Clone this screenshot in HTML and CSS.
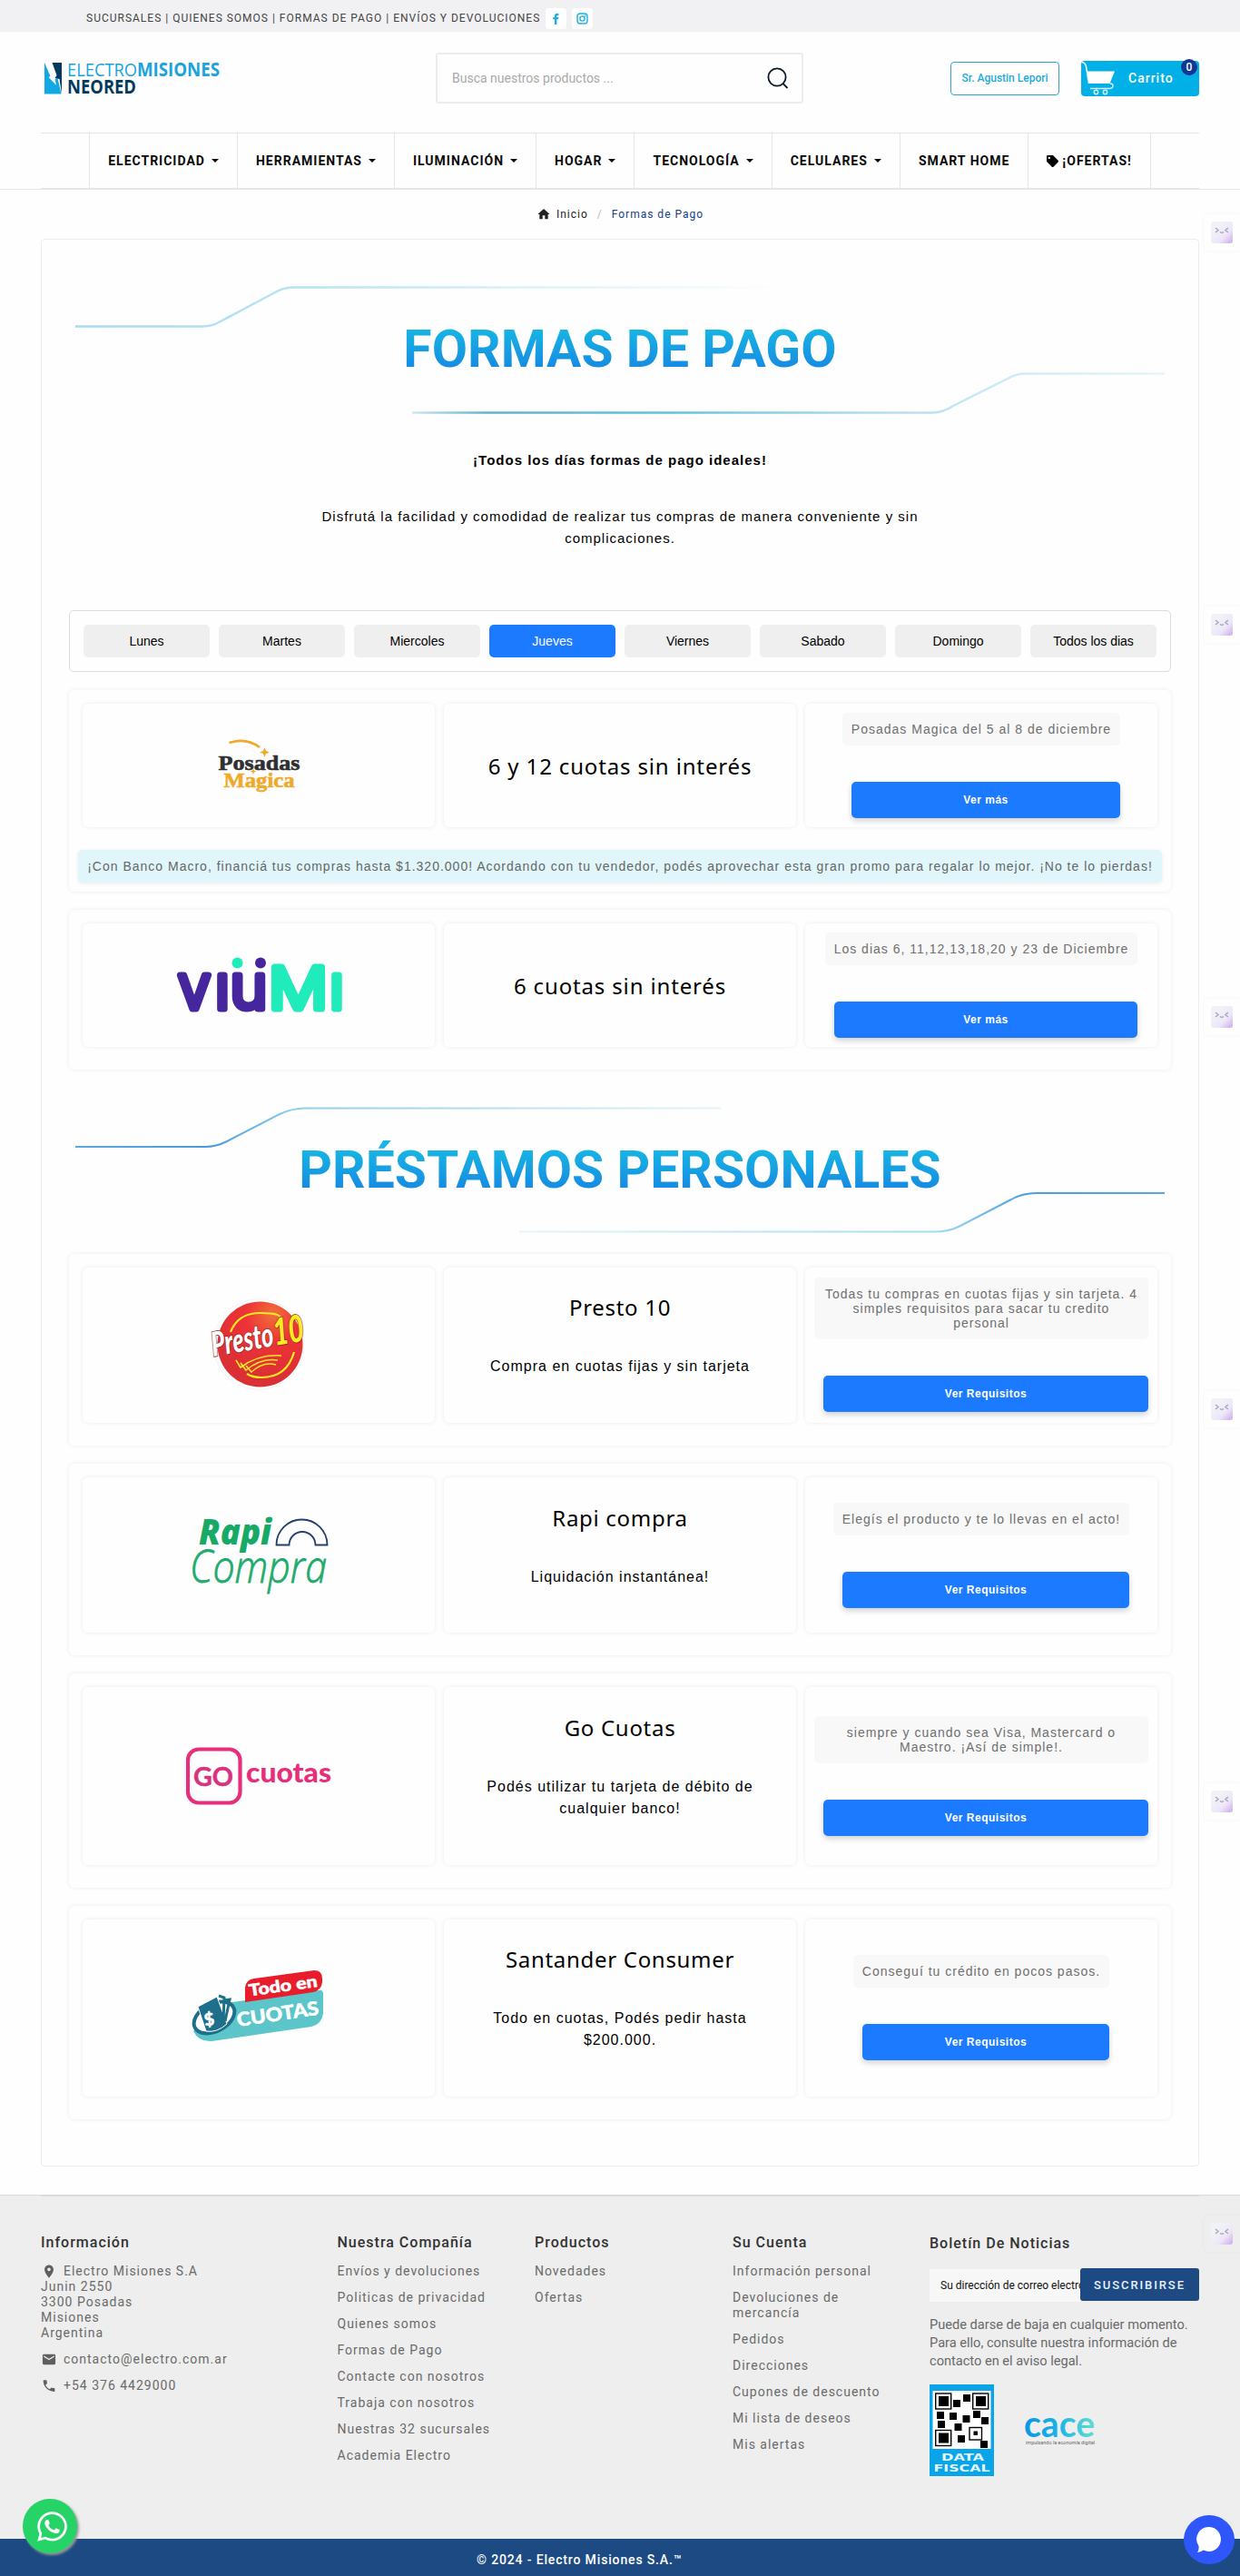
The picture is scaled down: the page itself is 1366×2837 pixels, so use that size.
FILE: index.html
```html
<!DOCTYPE html>
<html lang="es">
<head>
<meta charset="utf-8">
<title>Formas de Pago</title>
<link rel="stylesheet" href="styles.css">
</head>
<body>
<div class="topbar">
  <span>SUCURSALES | QUIENES SOMOS | FORMAS DE PAGO | ENVÍOS Y DEVOLUCIONES</span>
  <a class="social"><svg width="9" height="13" viewBox="0 0 9 13"><path d="M3 13V7.2H1.2V4.9H3V3.4C3 1.6 4 .8 5.5.8h1.9v2.2H6.2c-.6 0-.8.3-.8.9v1h2L7.1 7.2H5.4V13z" fill="#1fb0e0"/></svg></a>
  <a class="social"><svg width="13" height="13" viewBox="0 0 13 13" fill="none" stroke="#1fb0e0" stroke-width="1.4"><rect x="1" y="1" width="11" height="11" rx="3"/><circle cx="6.5" cy="6.5" r="2.6"/><circle cx="9.6" cy="3.4" r=".3"/></svg></a>
</div>

<header class="header">
  <svg class="logo" width="196" height="38" viewBox="0 0 196 38">
    <path d="M1 2L7.500 17L5.500 18L14 27L12.500 20L15.500 19L19.500 36.500H1z" fill="#10a9e6"/>
    <path d="M9.500 2H20V36L17.500 20L12.500 19L14.500 16z" fill="#033a5e"/>
    <text x="26" y="16.500" class="logo-light" textLength="77" lengthAdjust="spacingAndGlyphs">ELECTRO</text>
    <text x="103" y="16.500" class="logo-bold" textLength="91" lengthAdjust="spacingAndGlyphs">MISIONES</text>
    <text x="26" y="36" class="logo-navy" textLength="76" lengthAdjust="spacingAndGlyphs">NEORED</text>
  </svg>
  <div class="search">
    <span>Busca nuestros productos ...</span>
    <svg width="25" height="24" viewBox="0 0 25 24" fill="none" stroke="#0b1a24" stroke-width="1.800"><circle cx="11" cy="11" r="9.600"/><path d="M17.500 18l5 5"/></svg>
  </div>
  <div class="actions">
    <a class="user">Sr. Agustin Lepori</a>
    <a class="cart">
      <svg width="38" height="38" viewBox="0 0 38 38"><path d="M1 1.500q4 1 4.500 5L8.500 25" fill="none" stroke="#e4f7fd" stroke-width="1.600"/><path d="M6.500 11.500H37L31.500 25H9z" fill="#fff"/><path d="M32 25q3.500 0 3 3t-4 2.500H10" fill="none" stroke="#d5f2fc" stroke-width="1.400"/><circle cx="16.500" cy="34.500" r="2.200" fill="none" stroke="#d5f2fc" stroke-width="1.500"/><circle cx="26.500" cy="34.500" r="2.200" fill="none" stroke="#d5f2fc" stroke-width="1.500"/></svg>
      <span>Carrito</span><b class="badge">0</b>
    </a>
  </div>
</header>

<div class="navwrap">
  <nav class="nav">
    <a class="caret">ELECTRICIDAD</a><a class="caret">HERRAMIENTAS</a><a class="caret">ILUMINACIÓN</a><a class="caret">HOGAR</a><a class="caret">TECNOLOGÍA</a><a class="caret">CELULARES</a><a>SMART HOME</a><a><svg class="tagicon" width="13" height="13" viewBox="0 0 512 512"><path d="M0 252V48C0 21 21 0 48 0h204c13 0 25 5 34 14l212 212c19 19 19 49 0 68L294 498c-19 19-49 19-68 0L14 286c-9-9-14-21-14-34zM112 64a48 48 0 1 0 0 96 48 48 0 1 0 0-96z"/></svg>¡OFERTAS!</a>
  </nav>
</div>

<div class="crumbs">
  <svg width="16" height="16" viewBox="0 0 24 24" fill="#222"><path d="M10 20v-6h4v6h5v-8h3L12 3 2 12h3v8z"/></svg>
  <span>Inicio</span><i>/</i><span class="current">Formas de Pago</span>
</div>

<main class="main">
  <div class="banner">
    <svg width="1214" height="170" fill="none" stroke-width="3">
      <defs>
        <linearGradient id="a1" gradientUnits="userSpaceOnUse" x1="0" x2="790"><stop offset="0" stop-color="#a9daf1"/><stop offset=".35" stop-color="#b9e3f4"/><stop offset=".6" stop-color="#d5f0f9"/><stop offset="1" stop-color="#fefefe"/></linearGradient>
        <linearGradient id="a2" gradientUnits="userSpaceOnUse" x1="378" x2="1207"><stop offset="0" stop-color="#cfe8f0"/><stop offset=".1" stop-color="#5fb4cf"/><stop offset=".35" stop-color="#63c3dd"/><stop offset=".6" stop-color="#b0dcec"/><stop offset=".8" stop-color="#cdebf6"/><stop offset="1" stop-color="#e6f5fb"/></linearGradient>
      </defs>
      <path stroke="url(#a1)" stroke-width="2.500" d="M7 59.500H147Q157 59.500 165 55L227 22Q236 16.500 248 16.500H790"/>
      <path stroke="url(#a2)" stroke-width="2.500" d="M378 154.500H951Q963 154.500 974 147L1034 117Q1043 111.500 1054 111.500H1207"/>
    </svg>
    <h1 class="title">FORMAS DE PAGO</h1>
  </div>

  <div class="intro">
    <p><b>¡Todos los días formas de pago ideales!</b></p>
    <p>Disfrutá la facilidad y comodidad de realizar tus compras de manera conveniente y sin complicaciones.</p>
  </div>

  <div class="days">
    <button>Lunes</button><button>Martes</button><button>Miercoles</button><button class="active">Jueves</button><button>Viernes</button><button>Sabado</button><button>Domingo</button><button>Todos los dias</button>
  </div>

  <section class="card">
    <div class="row">
      <div class="cell">
        <svg width="92" height="60" viewBox="0 0 92 60">
          <path d="M13.500 5Q32 -1 47 10" fill="none" stroke="#f0a92b" stroke-width="2.600"/>
          <path d="M52.500 10l1.500 4 4 1.500-4 1.500-1.500 4-1.500-4-4-1.500 4-1.500z" fill="#f0a92b"/>
          <text x="1.500" y="34.500" class="posadas" textLength="90" lengthAdjust="spacingAndGlyphs">Posadas</text>
          <text x="7.500" y="53.500" class="magica" textLength="78" lengthAdjust="spacingAndGlyphs">Magica</text>
          <path d="M40 33l.9 2.600 2.600.9-2.600.9-.9 2.600-.9-2.600-2.600-.9 2.600-.9z" fill="#f0a92b"/>
        </svg>
      </div>
      <div class="cell mid promo"><h3>6 y 12 cuotas sin interés</h3></div>
      <div class="cell"><div class="info"><p>Posadas Magica del 5 al 8 de diciembre</p><a>Ver más</a></div></div>
    </div>
    <p class="note">¡Con Banco Macro, financiá tus compras hasta $1.320.000! Acordando con tu vendedor, podés aprovechar esta gran promo para regalar lo mejor. ¡No te lo pierdas!</p>
  </section>

  <section class="card">
    <div class="row">
      <div class="cell">
        <svg width="186" height="68" viewBox="0 0 186 68">
          <g class="viumi" fill="#45269c" stroke="#45269c">
            <text x="4" y="60" font-size="68" textLength="36" lengthAdjust="spacingAndGlyphs">v</text>
            <text x="45" y="60" font-size="68">ı</text>
            <text x="61.500" y="60" font-size="68" textLength="41" lengthAdjust="spacingAndGlyphs">u</text>
          </g>
          <g class="viumi" fill="#1febbb" stroke="#1febbb">
            <text x="104" y="60" font-size="63" textLength="65" lengthAdjust="spacingAndGlyphs">M</text>
            <text x="171" y="60" font-size="68">ı</text>
          </g>
          <circle cx="69.500" cy="9.500" r="6" fill="#1febbb"/><circle cx="95" cy="9.500" r="6" fill="#45269c"/>
        </svg>
      </div>
      <div class="cell mid promo"><h3>6 cuotas sin interés</h3></div>
      <div class="cell"><div class="info"><p>Los dias 6, 11,12,13,18,20 y 23 de Diciembre</p><a>Ver más</a></div></div>
    </div>
  </section>

  <div class="banner second">
    <svg width="1214" height="170" fill="none" stroke-width="2">
      <defs>
        <linearGradient id="b1" gradientUnits="userSpaceOnUse" x1="0" x2="718"><stop offset="0" stop-color="#5aa9e2"/><stop offset=".22" stop-color="#4b9ade"/><stop offset=".34" stop-color="#8fcdec"/><stop offset="1" stop-color="#e6f4f9"/></linearGradient>
        <linearGradient id="b2" gradientUnits="userSpaceOnUse" x1="496" x2="1207"><stop offset="0" stop-color="#e6f5fb"/><stop offset=".65" stop-color="#a4dbf2"/><stop offset=".78" stop-color="#4b9ede"/><stop offset="1" stop-color="#56a7e0"/></linearGradient>
      </defs>
      <path stroke="url(#b1)" d="M7 63H150Q162 63 174 57L232 27Q246 20.500 260 20.500H718"/>
      <path stroke="url(#b2)" d="M496 156.500H954Q970 156.500 982 150L1038 121Q1050 114 1066 114H1207"/>
    </svg>
    <h2 class="title">PRÉSTAMOS PERSONALES</h2>
  </div>

  <section class="card">
    <div class="row tall">
      <div class="cell">
        <svg width="110" height="104" viewBox="0 0 110 104">
          <defs><radialGradient id="rd" cx=".65" cy=".15" r=".8"><stop offset="0" stop-color="#f0703a"/><stop offset=".4" stop-color="#ee3337"/><stop offset="1" stop-color="#d92f35"/></radialGradient></defs>
          <circle cx="55" cy="51.500" r="50" fill="#fefefe" stroke="#f2f2f2"/>
          <circle cx="56.500" cy="51.500" r="47" fill="url(#rd)"/>
          <g fill="none" stroke="#fdea22" stroke-width="2.200"><path d="M24 38Q32 17 57 17T78 24M94 60Q86 88 58 88 48 88 42 84" /><path d="M30 69l5 8Q55 62 80 64M35 72l6 8Q58 66 76 69M41 75l6 7Q60 70 74 74" stroke-width="1.600"/></g>
          <text transform="translate(5 65) rotate(-10)" class="presto" fill="#fff" stroke="#8c2420" font-size="37" textLength="69" lengthAdjust="spacingAndGlyphs">Presto</text>
          <text transform="translate(73 53) rotate(-9)" class="presto" fill="#fdea22" stroke="#8c2420" font-size="41" textLength="34" lengthAdjust="spacingAndGlyphs">10</text>
        </svg>
      </div>
      <div class="cell mid"><h3>Presto 10</h3><p>Compra en cuotas fijas y sin tarjeta</p></div>
      <div class="cell"><div class="info"><p>Todas tu compras en cuotas fijas y sin tarjeta. 4 simples requisitos para sacar tu credito personal</p><a>Ver Requisitos</a></div></div>
    </div>
  </section>

  <section class="card">
    <div class="row tall">
      <div class="cell">
        <svg width="156" height="90" viewBox="0 0 156 90">
          <text x="12" y="32.500" class="rapi" textLength="80" lengthAdjust="spacingAndGlyphs">Rapi</text>
          <text x="2" y="75" class="compra" textLength="151" lengthAdjust="spacingAndGlyphs">Compra</text>
          <path d="M97.500 33.500a28 28 0 0 1 56 0h-13a14.500 14.500 0 0 0-29 0z" fill="none" stroke="#22406b" stroke-width="1.800"/>
        </svg>
      </div>
      <div class="cell mid"><h3>Rapi compra</h3><p>Liquidación instantánea!</p></div>
      <div class="cell"><div class="info"><p>Elegís el producto y te lo llevas en el acto!</p><a>Ver Requisitos</a></div></div>
    </div>
  </section>

  <section class="card">
    <div class="row taller">
      <div class="cell">
        <svg width="162" height="64" viewBox="0 0 162 64">
          <rect x="3" y="2.500" width="57.500" height="59" rx="12" fill="none" stroke="#e72e7b" stroke-width="4.200"/>
          <text x="9" y="42.500" class="go" textLength="44" lengthAdjust="spacingAndGlyphs">GO</text>
          <text x="67" y="39" class="cuotas" textLength="94" lengthAdjust="spacingAndGlyphs">cuotas</text>
        </svg>
      </div>
      <div class="cell mid"><h3>Go Cuotas</h3><p>Podés utilizar tu tarjeta de débito de cualquier banco!</p></div>
      <div class="cell"><div class="info"><p>siempre y cuando sea Visa, Mastercard o Maestro. ¡Así de simple!.</p><a>Ver Requisitos</a></div></div>
    </div>
  </section>

  <section class="card">
    <div class="row taller">
      <div class="cell">
        <svg class="santander" width="152" height="84" viewBox="0 0 152 84">
          <path d="M42 37L144 23Q149 22 149 27V48Q148 60 136 63L26 79Q12 80 6 68z" fill="#5bc5c9"/>
          <path d="M63 36V20Q64 11 73 10L139 1Q148 1 148 10V14Q147 23 138 25z" fill="#e81c2b"/>
          <ellipse cx="29" cy="53" rx="24" ry="15" transform="rotate(-28 29 53)" fill="#fff" stroke="#1d6f8c" stroke-width="4"/>
          <path d="M11 41L32 30L43 60Q32 70 20 68z" fill="#1d6f8c" stroke="#fff" stroke-width="1"/>
          <path d="M34 29l6 2-1 27M40 34l6-1-5 24" stroke="#1d6f8c" stroke-width="3" fill="none"/>
          <g class="todo"><text x="18" y="62" font-size="19" transform="rotate(-9 22 56)">$</text>
          <text transform="translate(55 63) rotate(-8.500)" font-size="21" textLength="91" lengthAdjust="spacingAndGlyphs">CUOTAS</text>
          <text transform="translate(68 29.500) rotate(-8)" font-size="18" textLength="76" lengthAdjust="spacingAndGlyphs">Todo en</text></g>
        </svg>
      </div>
      <div class="cell mid"><h3>Santander Consumer</h3><p>Todo en cuotas, Podés pedir hasta $200.000.</p></div>
      <div class="cell"><div class="info"><p>Conseguí tu crédito en pocos pasos.</p><a>Ver Requisitos</a></div></div>
    </div>
  </section>
</main>

<footer class="footer">
  <div class="cols">
    <div>
      <h4>Información</h4>
      <div class="addr"><svg width="18" height="18" viewBox="0 0 24 24"><path d="M12 2C8.100 2 5 5.100 5 9c0 5.200 7 13 7 13s7-7.800 7-13c0-3.900-3.100-7-7-7zm0 9.500a2.500 2.500 0 1 1 0-5 2.500 2.500 0 0 1 0 5z"/></svg>Electro Misiones S.A<br>Junin 2550<br>3300 Posadas<br>Misiones<br>Argentina</div>
      <div class="addr"><svg width="18" height="18" viewBox="0 0 24 24"><path d="M20 4H4c-1.100 0-2 .9-2 2v12c0 1.100.9 2 2 2h16c1.100 0 2-.9 2-2V6c0-1.100-.9-2-2-2zm0 4l-8 5-8-5V6l8 5 8-5z"/></svg>contacto@electro.com.ar</div>
      <div class="addr"><svg width="18" height="18" viewBox="0 0 24 24"><path d="M6.600 10.800c1.400 2.800 3.800 5.100 6.600 6.600l2.200-2.200c.3-.3.700-.4 1-.2 1.100.4 2.300.6 3.600.6.600 0 1 .4 1 1V20c0 .6-.4 1-1 1C10.600 21 3 13.400 3 4c0-.6.400-1 1-1h3.500c.6 0 1 .4 1 1 0 1.200.2 2.400.6 3.600.1.300 0 .7-.2 1z"/></svg>+54 376 4429000</div>
    </div>
    <div><h4>Nuestra Compañía</h4>
      <ul><li>Envíos y devoluciones</li><li>Politicas de privacidad</li><li>Quienes somos</li><li>Formas de Pago</li><li>Contacte con nosotros</li><li>Trabaja con nosotros</li><li>Nuestras 32 sucursales</li><li>Academia Electro</li></ul></div>
    <div><h4>Productos</h4><ul><li>Novedades</li><li>Ofertas</li></ul></div>
    <div><h4>Su Cuenta</h4>
      <ul><li>Información personal</li><li>Devoluciones de mercancía</li><li>Pedidos</li><li>Direcciones</li><li>Cupones de descuento</li><li>Mi lista de deseos</li><li>Mis alertas</li></ul></div>
    <div class="news"><h4>Boletín De Noticias</h4>
      <div class="form"><span class="field">Su dirección de correo electrónico</span><button>SUSCRIBIRSE</button></div>
      <p>Puede darse de baja en cualquier momento. Para ello, consulte nuestra información de contacto en el aviso legal.</p>
      <div class="seals">
        <svg width="71" height="101" viewBox="0 0 71 101">
          <rect width="71" height="101" fill="#0aa5e8"/><rect x="3.500" y="7" width="64" height="64" fill="#fff"/>
          <g fill="none" stroke="#000" stroke-width="1.400"><rect x="6.700" y="10" width="17" height="17"/><rect x="47.700" y="10" width="17" height="17"/><rect x="6.700" y="50.500" width="17" height="17"/><rect x="44" y="47.500" width="13.500" height="13.500"/></g>
          <path d="M10 13h11v11H10zM51 13h11v11H51zM10 53.500h11v11H10zM48.500 51.500H53V56h-4.500zM26 17h8v8h-8zM37 11h8v8h-8zM8 30h8v8H8zM22 31h8v8h-8zM36.500 34h8v8h-8zM48 29h8v8h-8zM57 36h8v8h-8zM9 40h8v8H9zM27.500 43h8v8h-8zM31 56h8v8h-8zM56 62h8v8h-8z"/>
          <text x="13" y="84" class="fiscal" textLength="47" lengthAdjust="spacingAndGlyphs">DATA</text><text x="4.500" y="96" class="fiscal" textLength="62" lengthAdjust="spacingAndGlyphs">FISCAL</text>
        </svg>
        <svg width="78" height="34" viewBox="0 0 78 34">
          <defs><linearGradient id="cg"><stop offset="0" stop-color="#0b95e4"/><stop offset=".5" stop-color="#1cb4e8"/><stop offset="1" stop-color="#63ddd0"/></linearGradient></defs>
          <text x="-1" y="24" class="cace" fill="url(#cg)" textLength="78" lengthAdjust="spacingAndGlyphs">cace</text>
          <text x="1" y="32" class="mini" textLength="76" lengthAdjust="spacingAndGlyphs">impulsando la economía digital</text>
        </svg>
      </div>
    </div>
  </div>
  <div class="copy">© 2024 - Electro Misiones S.A.™</div>
</footer>

<a class="whatsapp"><svg width="33" height="33" viewBox="0 30 448 452" fill="#fff"><path d="M380.900 97.100C339 55.100 283.200 32 223.900 32c-122.400 0-222 99.600-222 222 0 39.100 10.200 77.300 29.600 111L0 480l117.700-30.900c32.400 17.700 68.900 27 106.100 27h.1c122.300 0 224.100-99.600 224.100-222 0-59.300-25.200-115-67.100-157zm-157 341.600c-33.200 0-65.700-8.900-94-25.700l-6.700-4-69.800 18.300L72 359.200l-4.400-7c-18.500-29.400-28.200-63.300-28.200-98.200 0-101.700 82.800-184.500 184.600-184.500 49.300 0 95.600 19.200 130.400 54.100 34.800 34.900 56.200 81.200 56.100 130.500 0 101.800-84.900 184.600-186.600 184.600zm101.200-138.200c-5.500-2.800-32.800-16.200-37.900-18-5.100-1.900-8.800-2.800-12.500 2.800-3.700 5.600-14.300 18-17.600 21.800-3.200 3.700-6.500 4.200-12 1.400-32.600-16.300-54-29.100-75.500-66-5.700-9.800 5.700-9.100 16.300-30.300 1.800-3.700.9-6.900-.5-9.700-1.400-2.800-12.500-30.100-17.100-41.200-4.500-10.800-9.100-9.300-12.500-9.500-3.200-.2-6.900-.2-10.600-.2-3.700 0-9.700 1.400-14.800 6.900-5.100 5.600-19.400 19-19.400 46.300 0 27.300 19.900 53.700 22.600 57.400 2.800 3.700 39.100 59.700 94.800 83.800 35.200 15.200 49 16.500 66.600 13.900 10.700-1.600 32.800-13.400 37.400-26.400 4.600-13 4.600-24.100 3.200-26.400-1.300-2.500-5-3.900-10.500-6.600z"/></svg></a>
<a class="chat"><svg width="28" height="30" viewBox="0 0 28 30" fill="#fff"><path d="M14.500 1A13 13.500 0 1 1 8 26.500Q4 28.500 1 29q2-2.500 1.500-7A13 13.500 0 0 1 14.500 1z"/></svg></a>
<svg width="0" height="0" class="defs"><defs>
  <linearGradient id="fg" x1="0" y1="0" x2="1" y2="1"><stop offset=".3" stop-color="#f0f2f7"/><stop offset=".65" stop-color="#eee6f8"/><stop offset="1" stop-color="#cda8ec"/></linearGradient>
  <g id="face"><rect width="24" height="24" rx="3" fill="url(#fg)"/><path d="M5 7l3 2.500L5 12M19 7l-3 2.500L19 12M10 11.500q2 1.600 4 0" fill="none" stroke="#a9a9b5" stroke-width="1.500"/></g>
</defs></svg>
<div class="side s1"><svg width="24" height="24"><use href="#face"/></svg></div>
<div class="side s2"><svg width="24" height="24"><use href="#face"/></svg></div>
<div class="side s3"><svg width="24" height="24"><use href="#face"/></svg></div>
<div class="side s4"><svg width="24" height="24"><use href="#face"/></svg></div>
<div class="side s5"><svg width="24" height="24"><use href="#face"/></svg></div>
<div class="side s6"><svg width="24" height="24"><use href="#face"/></svg></div>
</body>
</html>
```
FILE: styles.css
```css
*{box-sizing:border-box}
body{margin:0;position:relative;background:#fefefe;font:400 14px/17px Roboto,sans-serif;letter-spacing:1px;color:#222}
h1,h2,h3,h4,p,ul{margin:0;padding:0;font-weight:400}
ul{list-style:none}
svg{display:block;flex:none;overflow:visible}
svg text{letter-spacing:0}
button{font:inherit;letter-spacing:inherit;border:0;padding:0}

.topbar{height:35px;padding:5px 0 0 95px;background:#f1f1f3;display:flex;align-items:center;font-size:12px;color:#444}
.social{width:23px;height:23px;margin-left:6px;background:#fff;border-radius:3px;display:flex;align-items:center;justify-content:center}

.header{width:1276px;height:111px;margin:0 auto;padding-bottom:9px;display:grid;grid-template-columns:435px 405px 1fr;align-items:center}
.logo{margin-left:3px;font-family:"Open Sans",sans-serif;font-size:20.500px}
.logo-light{fill:#1aa3dc}
.logo-bold{fill:#1aa3dc;font-weight:700}
.logo-navy{fill:#033a5e;font-weight:700}
.search{height:56px;padding:0 13px 0 16px;border:2px solid #ececee;border-radius:3px;display:flex;align-items:center;justify-content:space-between;letter-spacing:0;color:#a9a9a9}
.actions{display:flex;justify-content:flex-end;align-items:center;gap:24px}
.user{width:120px;height:37px;border:1px solid #2ba6cb;border-radius:4px;display:flex;align-items:center;justify-content:center;font-size:12px;font-weight:500;letter-spacing:0;color:#1eabda}
.cart{position:relative;width:130px;height:39px;background:#00b0e6;border-radius:4px;display:flex;align-items:center;gap:14px;color:#fff;font-weight:500}
.badge{position:absolute;right:2px;top:-2px;width:18px;height:18px;border-radius:50%;background:#103893;font:500 12px/18px Roboto,sans-serif;text-align:center;letter-spacing:0}

.navwrap{border-bottom:1px solid #e6e6e6}
.nav{width:1276px;height:62px;margin:0 auto;border-top:1px solid #e4e5e7;border-bottom:1px solid #e4e5e7;display:flex;justify-content:center}
.nav a{padding:0 20px;border-right:1px solid #e4e5e7;display:flex;align-items:center;font-weight:700;color:#0a0a0a}
.nav a:first-child{border-left:1px solid #e4e5e7}
.caret::after{content:"";margin-left:7px;border:4px solid transparent;border-top-color:#0a0a0a;border-bottom:0}
.tagicon{margin-right:4px}

.crumbs{height:54px;display:flex;align-items:center;justify-content:center;font-size:12px}
.crumbs span:first-of-type{margin-left:6px}
.crumbs i{font-style:normal;color:#bbb;margin:0 10px}
.current{color:#143f89}

.main{width:1276px;margin:0 auto;padding:36px 30px 51px;border:1px solid #ececec;border-radius:4px;font-family:"Liberation Sans",Arial,sans-serif;color:#000}
.banner{display:grid;height:170px;justify-items:center}
.banner>*{grid-area:1/1}
.title{align-self:start;margin-top:51px;font:700 57px/67px Roboto,sans-serif;letter-spacing:.06px;background:linear-gradient(#17b4e3 18%,#168ae2 82%);-webkit-background-clip:text;background-clip:text;color:transparent}
.second{margin:22px 0 10.500px}
.second .title{margin-top:55px}
.intro{padding-top:25px;font-size:15px;line-height:24px;text-align:center}
.intro p{width:700px;margin:0 auto 38px}
.intro p:last-child{margin-bottom:0}
.intro b{font-weight:700}
.days{margin-top:67px;height:68px;border:1px solid #dcdcdc;border-radius:5px;padding:15px;display:grid;grid-template-columns:repeat(8,1fr);gap:10px}
.days button{background:#efefef;border-radius:5px;font-size:14px;letter-spacing:0;color:#000}
.days .active{background:#1b7aff;color:#fff}

.card{margin-top:20px;padding:15px 10px 10px;border-radius:6px;box-shadow:0 0 5px rgba(0,0,0,.08)}
.second+.card{margin-top:0}
.row{height:136px;margin:0 5px 15px;display:grid;grid-template-columns:repeat(3,1fr);gap:10px}
.tall{height:171.400px}
.taller{height:195.400px}
.cell{border-radius:6px;box-shadow:0 0 5px rgba(0,0,0,.08);display:flex;align-items:center;justify-content:center}
.mid{flex-direction:column;padding:0 21px 21.800px;text-align:center}
.mid.promo{padding-bottom:0}
.mid h3{font:400 24px/33px "Noto Sans",sans-serif;letter-spacing:.7px}
.mid.promo h3{letter-spacing:.85px}
.mid p{margin-top:37px;font-size:16px;line-height:24px}
.info{max-width:368px;display:flex;flex-direction:column}
.info p{padding:10px;background:#f8f8f8;border-radius:5px;font-size:14px;line-height:16px;text-align:center;color:#6f6f6f}
.info a{height:40px;margin:40px 0 0 10px;border-radius:5px;background:#1b7aff;box-shadow:0 3px 6px rgba(0,0,0,.18);color:#fff;font:700 12px/40px "Liberation Sans",sans-serif;letter-spacing:.5px;text-align:center}
.note{margin-top:25px;height:36px;background:#e0f6fa;border-radius:5px;box-shadow:0 1px 4px rgba(0,0,0,.08);font-size:14px;line-height:36px;text-align:center;white-space:nowrap;color:#666}

.posadas,.magica{font:700 24px "Liberation Serif",serif;fill:#2f2f31;stroke:#2f2f31;stroke-width:.6px}
.magica{fill:#f0a92b;stroke:#f0a92b}
.viumi{font-family:Inter,sans-serif;font-weight:300;stroke-width:7px;stroke-linejoin:round}
.presto{font-family:Lato,sans-serif;font-weight:900;font-style:italic;stroke-width:1.500px;paint-order:stroke}
.rapi{font:italic 800 39px "Open Sans",sans-serif;fill:#17a966}
.compra{font:italic 300 49px "Open Sans",sans-serif;fill:#22aa6d;stroke:#22aa6d;stroke-width:.8px}
.go{font:700 29px Lato,sans-serif;fill:#d93280;stroke:#d93280;stroke-width:.5px}
.cuotas{font:900 30px Lato,sans-serif;fill:#e72e7b}
.santander{margin-right:5px}
.todo{font-family:Lato,sans-serif;font-weight:900;fill:#fff;stroke:#fff;stroke-width:.5px}

.footer{margin-top:31px;background:#eee;border-top:1px solid #d9d9d9}
.cols{width:1276px;height:378px;margin:0 auto;padding-top:41px;border-top:1px solid #dcdcdc;display:grid;grid-template-columns:326.500px 217.500px 218px 217px 297px;color:#6a6a6a}
.cols h4{font-size:16px;line-height:19px;font-weight:500;color:#333;margin-bottom:14px}
.cols li{width:180px;margin-bottom:12px}
.addr{margin-bottom:12px}
.addr svg{display:inline-block;vertical-align:top;margin-right:7px;fill:#5f5f5f;height:17px}
.news h4{margin:1px 0 18px}
.form{height:37px;display:grid;grid-template-columns:166px 131px}
.field{margin-top:1px;height:36px;padding-left:12px;overflow:hidden;white-space:nowrap;background:#f7f7f7;font-size:12px;line-height:37px;letter-spacing:0;color:#111}
.form button{height:36px;background:#1d4a82;color:#e8f2ff;border-radius:3px;font-size:13px;font-weight:500;letter-spacing:1.900px}
.news p{margin-top:15px;font-size:14.600px;line-height:20px;letter-spacing:0}
.seals{margin-top:16px;display:flex;gap:34px;align-items:center}
.fiscal{font:700 11px "DejaVu Sans",sans-serif;fill:#e2f7ff}
.cace{font:700 41px Lato,sans-serif}
.mini{font:400 6px Roboto,sans-serif;fill:#666}
.copy{height:41px;background:#1d4a82;color:#fff;font-weight:500;line-height:47px;letter-spacing:.85px;padding-left:525px}

.defs{position:absolute}
.whatsapp,.chat,.side{position:absolute;display:flex;align-items:center;justify-content:center}
.whatsapp{left:25px;top:2752px;width:60px;height:60px;border-radius:50%;background:#25d366;box-shadow:2px 2px 3px #999;padding-left:4px}
.chat{left:1304px;top:2770px;width:56px;height:54px;border-radius:50%;background:#2f56fb}
.side{right:0;width:40px;height:40px;border-radius:6px 0 0 6px;box-shadow:0 0 4px rgba(0,0,0,.04);padding-right:1px}
.s1{top:236px}.s2{top:668px}.s3{top:1100px}.s4{top:1532px}.s5{top:1964px}.s6{top:2440px}
```
